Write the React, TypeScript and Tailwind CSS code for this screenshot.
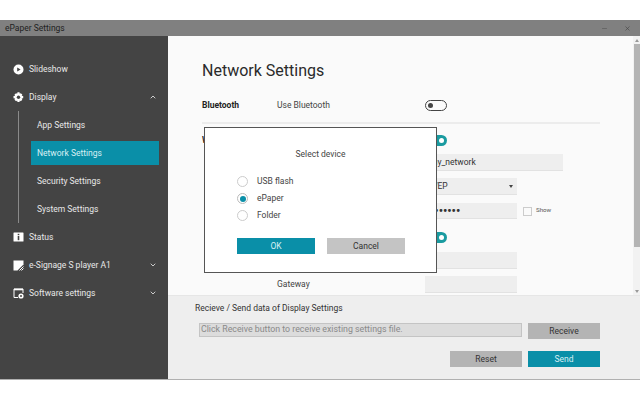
// App.tsx - ePaper Settings window, Network Settings page with device dialog
import React from 'react';
import { ChevronDown, ChevronUp, Minus, X } from 'lucide-react';

const font = 'font-["Roboto","Open_Sans",sans-serif]';

const PlayIcon = () => (
  <svg width="11" height="11" viewBox="0 0 11 11">
    <circle cx="5.5" cy="5.5" r="5" fill="#fff" />
    <path d="M4.2 3.4 L7.6 5.5 L4.2 7.6 Z" fill="#444" />
  </svg>
);

const GearIcon = () => (
  <svg width="11" height="11" viewBox="0 0 11 11">
    <path
      d="M4.5 0.3h2l.3 1.4 1-.5 1.5 1.4-.6 1.1 1.5.4v2.2l-1.5.3.6 1.2-1.5 1.4-1-.6-.3 1.5h-2l-.4-1.5-1 .6L1.5 7.8l.6-1.2-1.6-.3V4.1l1.6-.4-.6-1.1 1.6-1.4 1 .5z"
      fill="#fff"
    />
    <circle cx="5.5" cy="5.2" r="1.7" fill="#444" />
  </svg>
);

const InfoIcon = () => (
  <svg width="11" height="10" viewBox="0 0 11 10">
    <rect x="0.5" y="0.5" width="10" height="9" rx="0.5" fill="#fff" />
    <rect x="4.7" y="1.8" width="1.6" height="1.4" fill="#444" />
    <rect x="4.7" y="4" width="1.6" height="4.2" fill="#444" />
  </svg>
);

const SignageIcon = () => (
  <svg width="11" height="11" viewBox="0 0 11 11">
    <path d="M0.5 0.5H10.5V4.5L4.5 10.5H0.5Z" fill="#fff" />
    <path d="M6.5 10.5L10.5 6.5M8.5 10.5L10.5 8.5" stroke="#fff" strokeWidth="1" />
  </svg>
);

const SoftwareIcon = () => (
  <svg width="11" height="11" viewBox="0 0 11 11" fill="none">
    <path d="M5 9.5H1V1H10V5" stroke="#fff" strokeWidth="1" />
    <path d="M1 1.5H10" stroke="#fff" strokeWidth="1.6" />
    <circle cx="8" cy="8" r="2.6" fill="#fff" />
    <circle cx="8" cy="8" r="1" fill="#444" />
  </svg>
);

const NavItem = ({ icon, label, chevron }: { icon: React.ReactNode; label: string; chevron?: 'up' | 'down' }) => (
  <div className="flex h-7 items-center pl-[13px] pr-[11px]">
    <span className="flex w-[16px] shrink-0">{icon}</span>
    <span className="flex-1 text-[8.5px] text-[#e8e8e8]">{label}</span>
    {chevron === 'up' && <ChevronUp size={8} color="#e8e8e8" strokeWidth={2.5} />}
    {chevron === 'down' && <ChevronDown size={8} color="#e8e8e8" strokeWidth={2.5} />}
  </div>
);

const SubItem = ({ label, active }: { label: string; active?: boolean }) => (
  <div className="flex h-7 items-center">
    <div
      className={`flex h-[24px] w-full items-center pl-[6px] text-[8.5px] ${
        active ? 'bg-[#0a8fa8] text-[#d8f0f4]' : 'text-[#e8e8e8]'
      }`}
    >
      {label}
    </div>
  </div>
);

const Toggle = ({ on }: { on?: boolean }) =>
  on ? (
    <div className="flex h-[11px] w-[22px] items-center justify-end rounded-full bg-[#1a9ba0] pr-[3px]">
      <div className="h-[5px] w-[5px] rounded-full bg-white" />
    </div>
  ) : (
    <div className="flex h-[11px] w-[22px] items-center rounded-full border border-[#444] pl-[2px]">
      <div className="h-[5px] w-[5px] rounded-full bg-[#444]" />
    </div>
  );

const Field = ({ className, children }: { className: string; children?: React.ReactNode }) => (
  <div className={`flex items-center border-b border-[#e2e2e2] bg-[#eeeeee] text-[8.5px] text-[#333] ${className}`}>
    {children}
  </div>
);

const Radio = ({ label, checked }: { label: string; checked?: boolean }) => (
  <div className="flex h-[17px] items-center">
    <div
      className={`flex h-[11px] w-[11px] items-center justify-center rounded-full border ${
        checked ? 'border-[#bbb]' : 'border-[#ccc]'
      }`}
    >
      {checked && <div className="h-[6px] w-[6px] rounded-full bg-[#0a8fa8]" />}
    </div>
    <span className="ml-[9px] text-[8.5px] text-[#444]">{label}</span>
  </div>
);

const Button = ({ label, primary, className }: { label: string; primary?: boolean; className: string }) => (
  <div
    className={`flex items-center justify-center text-[8.5px] ${
      primary ? 'bg-[#0a8fa8] text-[#d8f0f4]' : 'text-[#333]'
    } ${className}`}
  >
    {label}
  </div>
);

export default function App() {
  return (
    <div className={`${font} h-[408px] w-[640px] overflow-hidden bg-white pt-5`}>
      <div className="relative flex h-[360px] flex-col border-b border-[#b0b0b0]">
        {/* title bar */}
        <div className="flex h-[16px] shrink-0 items-center justify-between bg-[#808080] pl-[5px] pr-[9px]">
          <span className="text-[8.5px] text-[#222]">ePaper Settings</span>
          <div className="flex items-center gap-[16px]">
            <Minus size={7} color="#555" />
            <X size={7} color="#444" />
          </div>
        </div>

        <div className="flex min-h-0 flex-1">
          {/* sidebar */}
          <aside className="w-[168px] shrink-0 bg-[#444444] pt-[19px]">
            <NavItem icon={<PlayIcon />} label="Slideshow" />
            <NavItem icon={<GearIcon />} label="Display" chevron="up" />
            <div className="ml-[18px] mr-[9px] border-l border-[#8a8a8a] pl-[12px]">
              <SubItem label="App Settings" />
              <SubItem label="Network Settings" active />
              <SubItem label="Security Settings" />
              <SubItem label="System Settings" />
            </div>
            <NavItem icon={<InfoIcon />} label="Status" />
            <NavItem icon={<SignageIcon />} label="e-Signage S player A1" chevron="down" />
            <NavItem icon={<SoftwareIcon />} label="Software settings" chevron="down" />
          </aside>

          {/* main column */}
          <div className="flex min-w-0 flex-1 flex-col bg-[#fafafa]">
            <div className="flex min-h-0 flex-1">
              <div className="min-w-0 flex-1 overflow-hidden pl-[34px] pt-[24px]">
                <h1 className="text-[16px] leading-[22px] text-[#2a2a2a]">Network Settings</h1>
                <div className="mt-[16px] flex h-[14px] items-center">
                  <span className="w-[75px] text-[8.5px] font-bold text-[#222]">Bluetooth</span>
                  <span className="w-[148px] text-[8.5px] text-[#444]">Use Bluetooth</span>
                  <Toggle />
                </div>
                <div className="mt-[10px] h-[2px] w-[398px] bg-[#ececec]" />
                <div className="mt-[11px] flex h-[11px] items-center">
                  <span className="w-[223px] text-[8.5px] font-bold text-[#222]">Wi-Fi</span>
                  <Toggle on />
                </div>
                <div className="mt-[8px] flex flex-col pl-[223px]">
                  <Field className="h-[17px] w-[138px] pl-[5px]">my_network</Field>
                  <Field className="mt-[7px] h-[17px] w-[92px] justify-between pl-[5px] pr-[4px]">
                    WEP
                    <span className="border-x-[2px] border-t-[3px] border-x-transparent border-t-[#444]" />
                  </Field>
                  <div className="mt-[8px] flex items-center">
                    <Field className="h-[16px] w-[92px] pl-[5px] text-[12px] font-bold">•••••••</Field>
                    <div className="ml-[6px] h-[9px] w-[9px] border border-[#ccc]" />
                    <span className="ml-[4px] text-[6.2px] text-[#555]">Show</span>
                  </div>
                  <div className="mt-[13px]">
                    <Toggle on />
                  </div>
                  <Field className="mt-[9px] h-[17px] w-[92px]" />
                </div>
                <div className="mt-[7px] flex items-center">
                  <span className="w-[75px]" />
                  <span className="w-[148px] text-[8.5px] text-[#444]">Gateway</span>
                  <Field className="h-[17px] w-[92px]" />
                </div>
              </div>
              {/* scrollbar */}
              <div className="flex w-[7px] shrink-0 flex-col items-center bg-[#f2f2f2]">
                <div className="mt-[3px] border-x-[2.5px] border-b-[3px] border-x-transparent border-b-[#999]" />
                <div className="mt-[2px] h-[203px] w-[6px] bg-[#b4b4b4]" />
                <div className="mt-auto mb-[2px] border-x-[2.5px] border-t-[3px] border-x-transparent border-t-[#999]" />
              </div>
            </div>

            {/* bottom panel */}
            <div className="h-[84px] shrink-0 border-t border-[#e6e6e6] bg-[#eeeeee] pl-[27px] pr-[40px] pt-[6px]">
              <div className="text-[8.5px] leading-[12px] text-[#333]">Recieve / Send data of Display Settings</div>
              <div className="mt-[9px] flex items-start justify-between">
                <div className="ml-[4px] flex h-[14px] w-[323px] items-center border border-[#c4c4c4] bg-[#dcdcdc] pl-[1px] text-[8.8px] text-[#8a8a8a]">
                  Click Receive button to receive existing settings file.
                </div>
                <Button label="Receive" className="h-[16px] w-[72px] bg-[#b4b4b4]" />
              </div>
              <div className="mt-[12px] flex justify-end gap-[6px]">
                <Button label="Reset" className="h-[16px] w-[72px] bg-[#b4b4b4]" />
                <Button label="Send" primary className="h-[16px] w-[72px]" />
              </div>
            </div>
          </div>
        </div>

        {/* dialog */}
        <div className="absolute left-[204px] top-[107px] flex h-[146px] w-[233px] flex-col border border-[#555] bg-white">
          <div className="mt-[20px] text-center text-[8.5px] leading-[12px] text-[#444]">Select device</div>
          <div className="ml-[32px] mt-[13px] flex flex-col">
            <Radio label="USB flash" />
            <Radio label="ePaper" checked />
            <Radio label="Folder" />
          </div>
          <div className="ml-[32px] mt-[14px] flex gap-[12px]">
            <Button label="OK" primary className="h-[16px] w-[78px]" />
            <Button label="Cancel" className="h-[16px] w-[78px] bg-[#c4c4c4]" />
          </div>
        </div>
      </div>
    </div>
  );
}
